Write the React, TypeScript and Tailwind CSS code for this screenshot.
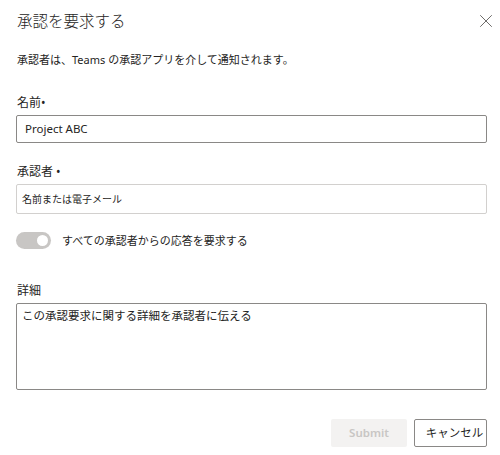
import { X } from "lucide-react";

const font = { fontFamily: '"Noto Sans", "Noto Sans CJK JP", sans-serif' };

function Label({ text }: { text: string }) {
  return <div className="h-[18px] text-[12px] text-[#252423] leading-[18px] mb-[3px] pl-[1px]">{text}</div>;
}

export default function App() {
  return (
    <div className="w-[500px] h-[455px] bg-white text-[#252423] overflow-hidden" style={font}>
      <div className="pl-4 pr-[13px] pt-[8px]">
        {/* Header */}
        <div className="h-[26px] flex items-center justify-between">
          <h1 className="text-[15.5px] font-light leading-[26px] pl-[1px]">承認を要求する</h1>
          <button className="w-[22px] h-[22px] mr-[-10px] text-[#605e5c] flex items-center justify-center">
            <X size={22} strokeWidth={1} />
          </button>
        </div>

        <p className="h-[18px] text-[11px] mt-[17px] leading-[18px] pl-[1px]">
          承認者は、Teams の承認アプリを介して通知されます。
        </p>

        <div className="mt-[25px]">
          <Label text="名前•" />
          <div className="h-[28px] border border-[#8a8886] rounded-[2px] flex items-center px-[8px] text-[11.5px]">
            Project ABC
          </div>
        </div>

        <div className="mt-[20px]">
          <Label text="承認者 •" />
          <div className="h-[30px] border border-[#d2d0ce] rounded-[2px] flex items-center px-[5px] text-[10px]">
            名前または電子メール
          </div>
        </div>

        <div className="mt-[18px] h-[17px] flex items-center gap-[11px]">
          <div className="w-[35px] h-[17px] rounded-full bg-[#c8c6c4] flex items-center justify-end pr-[3px]">
            <div className="w-[11px] h-[11px] rounded-full bg-white" />
          </div>
          <span className="text-[11px] leading-[17px]">すべての承認者からの応答を要求する</span>
        </div>

        <div className="mt-[33px]">
          <Label text="詳細" />
          <div className="h-[87px] border border-[#8a8886] rounded-[2px] px-[5px] pt-[3px] text-[11.5px] leading-[18px]">
            この承認要求に関する詳細を承認者に伝える
          </div>
        </div>

        <div className="mt-[29px] flex justify-end gap-[7px]">
          <button className="w-[76px] h-[28px] rounded-[2px] bg-[#f3f2f1] text-[#c8c6c4] text-[11.5px] font-semibold">
            Submit
          </button>
          <button className="w-[73px] h-[28px] rounded-[2px] border border-[#8a8886] text-[11.5px] pl-[8px]">
            キャンセル
          </button>
        </div>
      </div>
    </div>
  );
}
